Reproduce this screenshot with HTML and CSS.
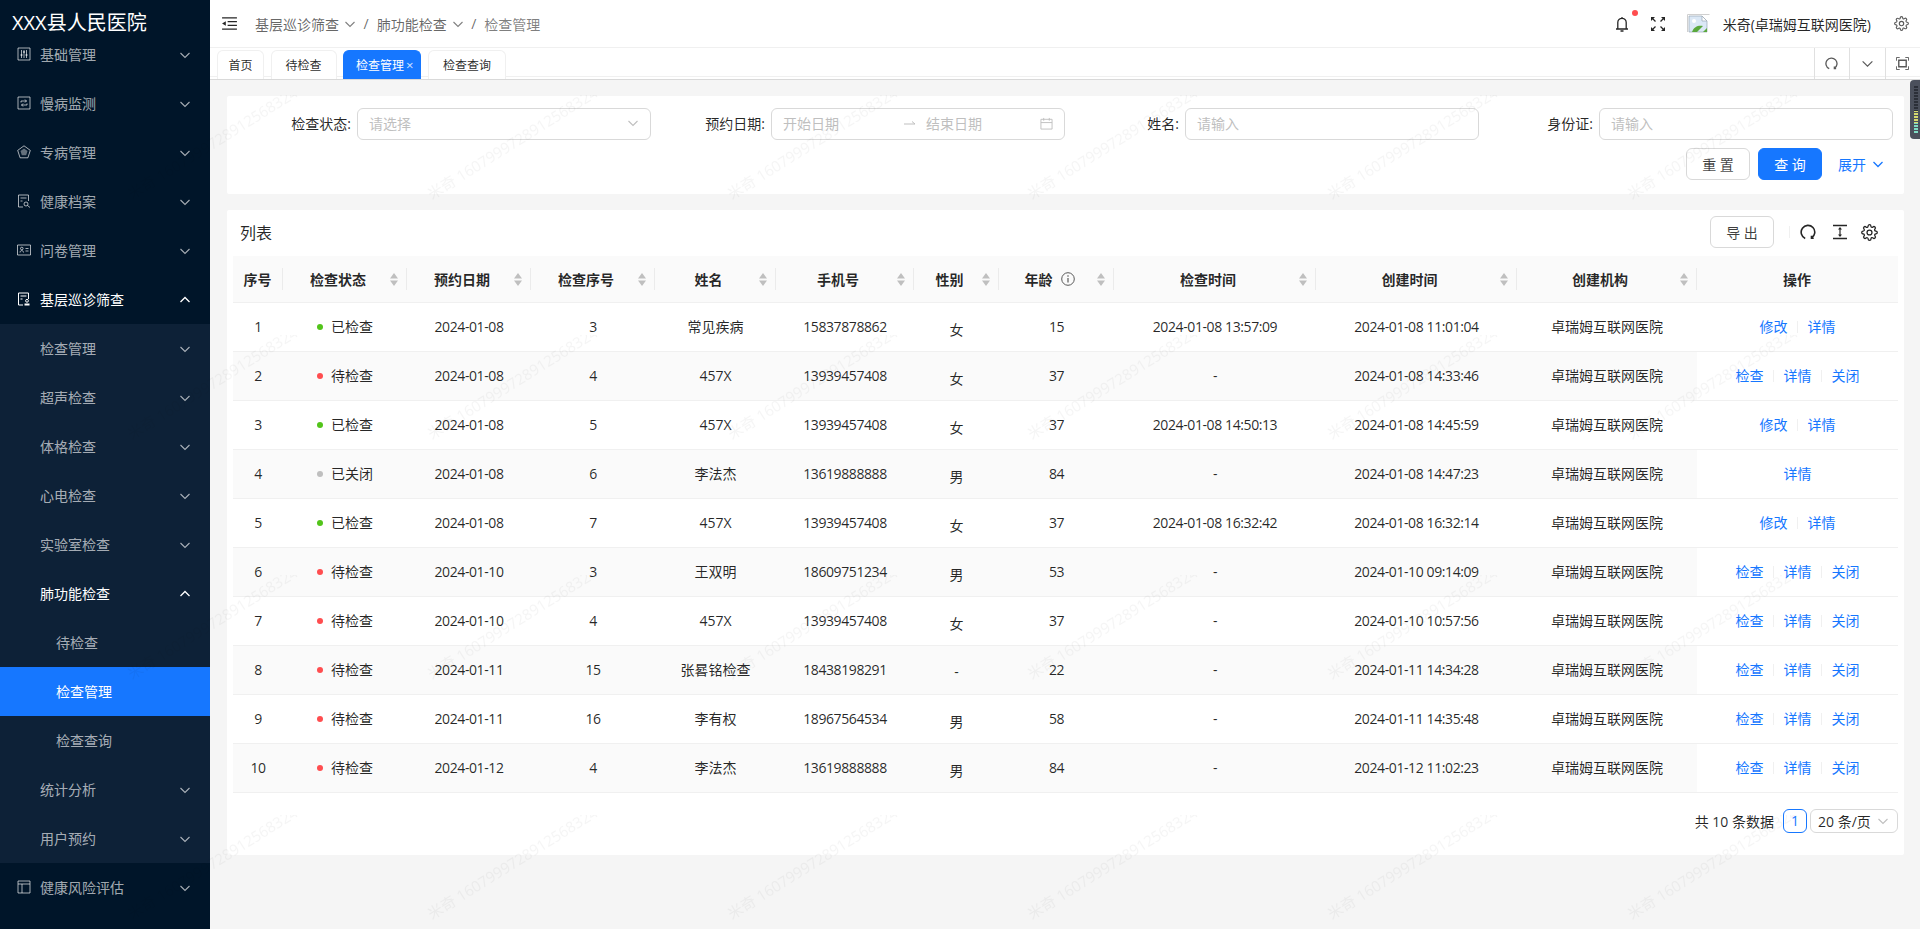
FILE: index.html
```html
<!DOCTYPE html>
<html>
<head>
    <meta charset="utf-8">
    <title>检查管理</title>
    <link rel="stylesheet" href="styles.css">
</head>
<body>

    <svg class="defs" width="0" height="0">
        <symbol id="chev" viewBox="0 0 12 12"><path d="M1.5 4l4.5 4.5L10.5 4" fill="none" stroke="currentColor" stroke-width="1.1"/></symbol>
        <symbol id="chevUp" viewBox="0 0 12 12"><path d="M1.5 8L6 3.5 10.5 8" fill="none" stroke="currentColor" stroke-width="1.3"/></symbol>
        <symbol id="sort" viewBox="0 0 8 13"><path d="M4 0l4 5.5H0zM4 13L0 7.5h8z" fill="#bfbfbf"/></symbol>
        <symbol id="gear" viewBox="0 0 24 24"><g fill="none" stroke="currentColor" stroke-width="1.8"><circle cx="12" cy="12" r="3.5"/><path d="M19.4 15a1.65 1.65 0 0 0 .33 1.82l.06.06a2 2 0 0 1-2.83 2.83l-.06-.06a1.65 1.65 0 0 0-1.82-.33 1.65 1.65 0 0 0-1 1.51V21a2 2 0 0 1-4 0v-.09A1.65 1.65 0 0 0 9 19.4a1.65 1.65 0 0 0-1.82.33l-.06.06a2 2 0 0 1-2.83-2.83l.06-.06a1.65 1.65 0 0 0 .33-1.82 1.65 1.65 0 0 0-1.51-1H3a2 2 0 0 1 0-4h.09A1.65 1.65 0 0 0 4.6 9a1.65 1.65 0 0 0-.33-1.82l-.06-.06a2 2 0 0 1 2.83-2.83l.06.06a1.65 1.65 0 0 0 1.82.33H9a1.65 1.65 0 0 0 1-1.51V3a2 2 0 0 1 4 0v.09a1.65 1.65 0 0 0 1 1.51 1.65 1.65 0 0 0 1.82-.33l.06-.06a2 2 0 0 1 2.83 2.83l-.06.06a1.65 1.65 0 0 0-.33 1.82V9a1.65 1.65 0 0 0 1.51 1H21a2 2 0 0 1 0 4h-.09a1.65 1.65 0 0 0-1.51 1z"/></g></symbol>
        <symbol id="reload" viewBox="0 0 16 16"><path d="M5.2 14.4A6.8 6.8 0 1 1 11.5 14M11.5 11.7v2.6h2.2" fill="none" stroke="currentColor" stroke-width="1.6"/></symbol>
    </svg>

    <aside class="sidebar">
        <div class="logo">XXX县人民医院</div>
        <div class="menuItem">
            <svg class="menuIcon" viewBox="0 0 14 14"><path d="M1 1h12v12H1zM4.5 3v8M7 3v8M9.5 3v8" fill="none" stroke="currentColor"/><path d="M3.5 8h2M6 5h2M8.5 8h2" stroke="currentColor" stroke-width="1.5"/></svg>
            <span>基础管理</span><svg class="chev"><use href="#chev"/></svg>
        </div>
        <div class="menuItem">
            <svg class="menuIcon" viewBox="0 0 14 14"><path d="M1 1h12v12H1zM4 6.5V5h5.5M8 3.5L9.5 5 8 6.5M10 7.5V9H4.5M6 10.5L4.5 9 6 7.5" fill="none" stroke="currentColor"/></svg>
            <span>慢病监测</span><svg class="chev"><use href="#chev"/></svg>
        </div>
        <div class="menuItem">
            <svg class="menuIcon" viewBox="0 0 14 14"><path d="M7 .8l6.3 4.6-2.4 7.4H3.1L.7 5.4z" fill="none" stroke="currentColor"/><path d="M7 3.5l3.5 2.5-1.3 4.2H4.8L3.5 6z" fill="currentColor" opacity=".6"/></svg>
            <span>专病管理</span><svg class="chev"><use href="#chev"/></svg>
        </div>
        <div class="menuItem">
            <svg class="menuIcon" viewBox="0 0 14 14"><path d="M6 13H1.5V1h10v6M3.5 4h6M3.5 7h2" fill="none" stroke="currentColor"/><circle cx="9" cy="10" r="2" fill="none" stroke="currentColor"/><path d="M10.5 11.5L13 13.5" stroke="currentColor"/></svg>
            <span>健康档案</span><svg class="chev"><use href="#chev"/></svg>
        </div>
        <div class="menuItem">
            <svg class="menuIcon" viewBox="0 0 14 14"><path d="M.5 2h13v10H.5zM8.5 5.5h3M8.5 8h3M3 9.5c0-2.5 3.5-2.5 3.5 0" fill="none" stroke="currentColor"/><circle cx="4.8" cy="5.5" r="1.3" fill="none" stroke="currentColor"/></svg>
            <span>问卷管理</span><svg class="chev"><use href="#chev"/></svg>
        </div>
        <div class="menuItem open">
            <svg class="menuIcon" viewBox="0 0 14 14"><path d="M6 13H1.5V1h10v6M3.5 4h6M3.5 7h2" fill="none" stroke="currentColor"/><circle cx="10" cy="8.8" r="1.4" fill="none" stroke="currentColor"/><path d="M7.5 13.5v-2h5v2z" fill="currentColor"/></svg>
            <span>基层巡诊筛查</span><svg class="chev"><use href="#chevUp"/></svg>
        </div>
        <div class="subMenu">
            <div class="menuItem"><span>检查管理</span><svg class="chev"><use href="#chev"/></svg></div>
            <div class="menuItem"><span>超声检查</span><svg class="chev"><use href="#chev"/></svg></div>
            <div class="menuItem"><span>体格检查</span><svg class="chev"><use href="#chev"/></svg></div>
            <div class="menuItem"><span>心电检查</span><svg class="chev"><use href="#chev"/></svg></div>
            <div class="menuItem"><span>实验室检查</span><svg class="chev"><use href="#chev"/></svg></div>
            <div class="menuItem open"><span>肺功能检查</span><svg class="chev"><use href="#chevUp"/></svg></div>
            <div class="menuItem leaf"><span>待检查</span></div>
            <div class="menuItem leaf active"><span>检查管理</span></div>
            <div class="menuItem leaf"><span>检查查询</span></div>
            <div class="menuItem"><span>统计分析</span><svg class="chev"><use href="#chev"/></svg></div>
            <div class="menuItem"><span>用户预约</span><svg class="chev"><use href="#chev"/></svg></div>
        </div>
        <div class="menuItem">
            <svg class="menuIcon" viewBox="0 0 14 14"><path d="M1 1h12v12H1zM1 4h12M5 4v9" fill="none" stroke="currentColor"/></svg>
            <span>健康风险评估</span><svg class="chev"><use href="#chev"/></svg>
        </div>
    </aside>

    <div class="main">
        <header class="topbar">
            <svg class="toggle" viewBox="0 0 16 14"><path d="M0 1h16M6 5h10M6 9h10M0 13h16" stroke="#262626" stroke-width="1.4"/><path d="M4 4.5v5L0 7z" fill="#262626"/></svg>
            <div class="crumbs">
                <span>基层巡诊筛查</span><svg class="crumbChev"><use href="#chev"/></svg>
                <span class="slash">/</span>
                <span>肺功能检查</span><svg class="crumbChev"><use href="#chev"/></svg>
                <span class="slash">/</span>
                <span class="crumbLast">检查管理</span>
            </div>
            <div class="topRight">
                <div class="bell">
                    <svg viewBox="0 0 14 16" width="14" height="16"><path d="M1 13h12M2.8 13V6.5a4.2 4.2 0 0 1 8.4 0V13M5.5 15h3M7 1v1" fill="none" stroke="#262626" stroke-width="1.3"/></svg>
                    <i class="redDot"></i>
                </div>
                <svg class="expand" viewBox="0 0 14 14"><path d="M1 1l3.5 3.5M13 1L9.5 4.5M1 13l3.5-3.5M13 13L9.5 9.500" stroke="#262626" stroke-width="1.3"/><path d="M0 0h4L0 4zM14 0v4L10 0zM0 14v-4l4 4zM14 14h-4l4-4z" fill="#262626"/></svg>
                <svg class="avatar" viewBox="0 0 23 19"><path d="M.5 18V.5h22" fill="none" stroke="#d0d0d0"/><path d="M2 2h13l5 5v11H2z" fill="#dbe8f6" stroke="#9aa7b5" stroke-width=".7"/><path d="M15 2v5h5z" fill="#fff" stroke="#9aa7b5" stroke-width=".7"/><path d="M5 18c2-6 7-7 11-6l-6 6z" fill="#5aa83c"/><path d="M16 18l4-4v4z" fill="#5aa83c"/><circle cx="7" cy="7" r="2" fill="#fff"/></svg>
                <span class="userName">米奇(卓瑞姆互联网医院)</span>
                <svg class="topGear"><use href="#gear"/></svg>
            </div>
        </header>

        <nav class="tabbar">
            <div class="tab first">首页</div>
            <div class="tab">待检查</div>
            <div class="tab current">检查管理<span class="tabClose">×</span></div>
            <div class="tab">检查查询</div>
            <div class="tabTools">
                <div class="tabTool"><svg><use href="#reload"/></svg></div>
                <div class="tabTool"><svg><use href="#chev"/></svg></div>
                <div class="tabTool"><svg viewBox="0 0 14 14"><path d="M.5 4V.5H4M10 .5h3.5V4M13.5 10v3.5H10M4 13.5H.5V10" fill="none" stroke="#595959"/><path d="M3 3.5h8v7H3z" fill="none" stroke="#595959" stroke-width="1.5"/></svg></div>
            </div>
        </nav>

        <div class="content">
            <section class="card searchCard">
                <div class="formRow">
                    <div class="field">
                        <label>检查状态:</label>
                        <div class="input"><span class="hint">请选择</span><svg class="inputChev"><use href="#chev"/></svg></div>
                    </div>
                    <div class="field">
                        <label>预约日期:</label>
                        <div class="input dateInput">
                            <span class="hint">开始日期</span>
                            <svg class="dateArrow" viewBox="0 0 12 6"><path d="M0 4h11L8 1.5" fill="none" stroke="#bfbfbf"/></svg>
                            <span class="hint">结束日期</span>
                            <svg class="dateIcon" viewBox="0 0 14 14"><path d="M1 2.5h12V13H1zM1 6h12M4 1v3M10 1v3" fill="none" stroke="#bfbfbf"/></svg>
                        </div>
                    </div>
                    <div class="field">
                        <label>姓名:</label>
                        <div class="input"><span class="hint">请输入</span></div>
                    </div>
                    <div class="field">
                        <label>身份证:</label>
                        <div class="input"><span class="hint">请输入</span></div>
                    </div>
                </div>
                <div class="formActions">
                    <button class="btn">重 置</button>
                    <button class="btn primary">查 询</button>
                    <a class="more">展开<svg><use href="#chevUp"/></svg></a>
                </div>
            </section>

            <section class="card listCard">
                <div class="listHead">
                    <h2>列表</h2>
                    <button class="btn">导 出</button>
                    <i class="toolSep"></i>
                    <svg class="listTool"><use href="#reload"/></svg>
                    <svg class="listTool" viewBox="0 0 16 16"><path d="M1 1.5h14M1 14.5h14" stroke="#262626" stroke-width="1.4"/><path d="M8 4v8" stroke="#262626" stroke-width="1.2"/><path d="M8 3l2 2.5H6zM8 13l-2-2.5h4z" fill="#262626"/></svg>
                    <svg class="listTool"><use href="#gear"/></svg>
                </div>

                <table class="grid">
                    <colgroup>
                        <col class="c50"><col class="c124"><col class="c124"><col class="c124"><col class="c121"><col class="c138"><col class="c85"><col class="c115"><col class="c202"><col class="c201"><col class="c180"><col class="c201">
                    </colgroup>
                    <thead>
                        <tr>
                            <th><div class="th">序号</div></th>
                            <th><div class="th"><span>检查状态</span><svg class="sort"><use href="#sort"/></svg></div></th>
                            <th><div class="th"><span>预约日期</span><svg class="sort"><use href="#sort"/></svg></div></th>
                            <th><div class="th"><span>检查序号</span><svg class="sort"><use href="#sort"/></svg></div></th>
                            <th><div class="th"><span>姓名</span><svg class="sort"><use href="#sort"/></svg></div></th>
                            <th><div class="th"><span>手机号</span><svg class="sort"><use href="#sort"/></svg></div></th>
                            <th><div class="th"><span>性别</span><svg class="sort"><use href="#sort"/></svg></div></th>
                            <th><div class="th"><span>年龄<svg class="info" viewBox="0 0 14 14"><circle cx="7" cy="7" r="6.3" fill="none" stroke="#595959"/><path d="M7 6v4.5" stroke="#595959" stroke-width="1.2"/><circle cx="7" cy="4" r=".8" fill="#595959"/></svg></span><svg class="sort"><use href="#sort"/></svg></div></th>
                            <th><div class="th"><span>检查时间</span><svg class="sort"><use href="#sort"/></svg></div></th>
                            <th><div class="th"><span>创建时间</span><svg class="sort"><use href="#sort"/></svg></div></th>
                            <th><div class="th"><span>创建机构</span><svg class="sort"><use href="#sort"/></svg></div></th>
                            <th><div class="th">操作</div></th>
                        </tr>
                    </thead>
                    <tbody>
                        <tr>
                            <td>1</td><td><i class="dot green"></i>已检查</td><td>2024-01-08</td><td>3</td><td>常见疾病</td><td>15837878862</td><td class="sex">女</td><td>15</td><td>2024-01-08 13:57:09</td><td>2024-01-08 11:01:04</td><td>卓瑞姆互联网医院</td>
                            <td class="ops"><a>修改</a><i></i><a>详情</a></td>
                        </tr>
                        <tr>
                            <td>2</td><td><i class="dot red"></i>待检查</td><td>2024-01-08</td><td>4</td><td>457X</td><td>13939457408</td><td class="sex">女</td><td>37</td><td>-</td><td>2024-01-08 14:33:46</td><td>卓瑞姆互联网医院</td>
                            <td class="ops"><a>检查</a><i></i><a>详情</a><i></i><a>关闭</a></td>
                        </tr>
                        <tr>
                            <td>3</td><td><i class="dot green"></i>已检查</td><td>2024-01-08</td><td>5</td><td>457X</td><td>13939457408</td><td class="sex">女</td><td>37</td><td>2024-01-08 14:50:13</td><td>2024-01-08 14:45:59</td><td>卓瑞姆互联网医院</td>
                            <td class="ops"><a>修改</a><i></i><a>详情</a></td>
                        </tr>
                        <tr>
                            <td>4</td><td><i class="dot grey"></i>已关闭</td><td>2024-01-08</td><td>6</td><td>李法杰</td><td>13619888888</td><td class="sex">男</td><td>84</td><td>-</td><td>2024-01-08 14:47:23</td><td>卓瑞姆互联网医院</td>
                            <td class="ops"><a>详情</a></td>
                        </tr>
                        <tr>
                            <td>5</td><td><i class="dot green"></i>已检查</td><td>2024-01-08</td><td>7</td><td>457X</td><td>13939457408</td><td class="sex">女</td><td>37</td><td>2024-01-08 16:32:42</td><td>2024-01-08 16:32:14</td><td>卓瑞姆互联网医院</td>
                            <td class="ops"><a>修改</a><i></i><a>详情</a></td>
                        </tr>
                        <tr>
                            <td>6</td><td><i class="dot red"></i>待检查</td><td>2024-01-10</td><td>3</td><td>王双明</td><td>18609751234</td><td class="sex">男</td><td>53</td><td>-</td><td>2024-01-10 09:14:09</td><td>卓瑞姆互联网医院</td>
                            <td class="ops"><a>检查</a><i></i><a>详情</a><i></i><a>关闭</a></td>
                        </tr>
                        <tr>
                            <td>7</td><td><i class="dot red"></i>待检查</td><td>2024-01-10</td><td>4</td><td>457X</td><td>13939457408</td><td class="sex">女</td><td>37</td><td>-</td><td>2024-01-10 10:57:56</td><td>卓瑞姆互联网医院</td>
                            <td class="ops"><a>检查</a><i></i><a>详情</a><i></i><a>关闭</a></td>
                        </tr>
                        <tr>
                            <td>8</td><td><i class="dot red"></i>待检查</td><td>2024-01-11</td><td>15</td><td>张晷铭检查</td><td>18438198291</td><td class="sex">-</td><td>22</td><td>-</td><td>2024-01-11 14:34:28</td><td>卓瑞姆互联网医院</td>
                            <td class="ops"><a>检查</a><i></i><a>详情</a><i></i><a>关闭</a></td>
                        </tr>
                        <tr>
                            <td>9</td><td><i class="dot red"></i>待检查</td><td>2024-01-11</td><td>16</td><td>李有权</td><td>18967564534</td><td class="sex">男</td><td>58</td><td>-</td><td>2024-01-11 14:35:48</td><td>卓瑞姆互联网医院</td>
                            <td class="ops"><a>检查</a><i></i><a>详情</a><i></i><a>关闭</a></td>
                        </tr>
                        <tr>
                            <td>10</td><td><i class="dot red"></i>待检查</td><td>2024-01-12</td><td>4</td><td>李法杰</td><td>13619888888</td><td class="sex">男</td><td>84</td><td>-</td><td>2024-01-12 11:02:23</td><td>卓瑞姆互联网医院</td>
                            <td class="ops"><a>检查</a><i></i><a>详情</a><i></i><a>关闭</a></td>
                        </tr>
                    </tbody>
                </table>

                <div class="pager">
                    <span>共 10 条数据</span>
                    <span class="pageNum">1</span>
                    <span class="pageSize">20 条/页<svg><use href="#chev"/></svg></span>
                </div>
            </section>
        </div>
    </div>

    <div class="sideWidget"><i></i></div>

    <svg class="watermark" width="100%" height="100%">
        <defs>
            <pattern id="wm" width="300" height="240" patternUnits="userSpaceOnUse" patternTransform="translate(0 95)">
                <text x="132" y="105" transform="rotate(-32 132 105)">米奇 16079997289125683244</text>
            </pattern>
        </defs>
        <rect width="100%" height="100%" fill="url(#wm)"/>
    </svg>

</body>
</html>
```

FILE: styles.css
```css
* {
    box-sizing: border-box;
}

html, body {
    height: 100%;
}

body {
    margin: 0;
    display: flex;
    overflow: hidden;
    font-family: "Open Sans", "Noto Sans CJK SC", sans-serif;
    font-size: 14px;
    color: rgba(0, 0, 0, 0.85);
    background-color: #f5f5f5;
}

.defs {
    position: absolute;
}

/* sidebar */
.sidebar {
    width: 210px;
    flex-shrink: 0;
    height: 100%;
    overflow: hidden;
    background-color: #001529;
    color: rgba(255, 255, 255, 0.65);
}

.logo {
    height: 30px;
    padding-left: 12px;
    font-size: 20px;
    line-height: 46px;
    white-space: nowrap;
    color: #fff;
}

.menuItem {
    position: relative;
    display: flex;
    align-items: center;
    height: 49px;
    padding: 0 0 2px 40px;
    white-space: nowrap;
}

.menuIcon {
    position: absolute;
    left: 17px;
    top: 17px;
    width: 14px;
    height: 14px;
}

.chev {
    position: absolute;
    right: 19px;
    top: 19px;
    width: 12px;
    height: 12px;
}

.menuItem.open {
    color: #fff;
}

.subMenu {
    background-color: #0d2137;
}

.menuItem.leaf {
    padding-left: 56px;
}

.menuItem.active {
    background-color: #1677ff;
    color: #fff;
}

/* header */
.main {
    flex: 1;
    min-width: 0;
    display: flex;
    flex-direction: column;
}

.topbar {
    height: 48px;
    flex-shrink: 0;
    display: flex;
    align-items: center;
    padding: 0 11px 0 12px;
    background-color: #fff;
    border-bottom: 1px solid #f0f0f0;
}

.toggle {
    width: 15px;
    height: 13px;
    margin-right: 18px;
}

.crumbs {
    display: flex;
    align-items: center;
    color: rgba(0, 0, 0, 0.6);
}

.crumbChev {
    width: 12px;
    height: 12px;
    margin-left: 5px;
    color: rgba(0, 0, 0, 0.5);
}

.slash {
    margin: 0 8px 0 7.5px;
}

.crumbLast {
    color: rgba(0, 0, 0, 0.5);
}

.topRight {
    margin-left: auto;
    display: flex;
    align-items: center;
}

.bell {
    position: relative;
    display: flex;
    margin-right: 22px;
}

.redDot {
    position: absolute;
    top: -6px;
    right: -9px;
    width: 6px;
    height: 6px;
    border-radius: 50%;
    background-color: #ff4d4f;
}

.expand {
    width: 14px;
    height: 14px;
    margin-right: 22px;
}

.avatar {
    width: 23px;
    height: 19px;
    margin-right: 13px;
}

.userName {
    margin-right: 23px;
    white-space: nowrap;
}

.topGear {
    width: 15px;
    height: 15px;
    color: #595959;
}

/* tabs */
.tabbar {
    height: 32px;
    flex-shrink: 0;
    display: flex;
    align-items: flex-end;
    gap: 6.5px;
    padding-left: 7px;
    background-color: #fff;
    border-bottom: 1px solid #d9d9d9;
    box-shadow: inset 0 -2px 0 #fff, inset 0 -3px 0 #f0f0f0;
}

.tab {
    height: 29px;
    padding: 0 14px 1px;
    display: flex;
    align-items: center;
    font-size: 12px;
    border: 1px solid #f0f0f0;
    border-bottom: 0;
    border-radius: 6px 6px 0 0;
    background-color: #fff;
    white-space: nowrap;
}

.tab.first {
    padding: 0 10.5px 1px;
}

.tab.current {
    padding: 0 7px 1px 12px;
    border-color: #1677ff;
    background-color: #1677ff;
    color: #fff;
}

.tabClose {
    margin-left: 2px;
    font-size: 13px;
    opacity: 0.8;
}

.tabTools {
    margin-left: auto;
    display: flex;
    align-self: stretch;
}

.tabTool {
    width: 35.5px;
    display: flex;
    align-items: center;
    justify-content: center;
    border-left: 1px solid #e0e0e0;
    color: #595959;
}

.tabTool svg {
    width: 13px;
    height: 13px;
}

/* content */
.content {
    flex: 1;
    padding: 16px 16px 0 17px;
}

.card {
    background-color: #fff;
    border-radius: 2px;
}

.searchCard {
    height: 98px;
    padding: 12px 11px 0 10px;
}

.formRow {
    display: grid;
    grid-template-columns: repeat(4, 1fr);
}

.field {
    display: flex;
    align-items: center;
}

.field label {
    width: 120px;
    flex-shrink: 0;
    padding: 0 6px 2px 0;
    text-align: right;
}

.input {
    flex: 1;
    height: 32px;
    display: flex;
    align-items: center;
    padding: 0 11px 2px;
    border: 1px solid #d9d9d9;
    border-radius: 6px;
    background-color: #fff;
}

.hint {
    color: #bfbfbf;
}

.inputChev {
    margin-left: auto;
    width: 12px;
    height: 12px;
    color: #bfbfbf;
}

.dateArrow {
    width: 12px;
    height: 6px;
    margin: 0 10px 0 65px;
}

.dateIcon {
    margin-left: auto;
    width: 13px;
    height: 13px;
}

.formActions {
    display: flex;
    align-items: center;
    justify-content: flex-end;
    gap: 8px;
    margin-top: 8px;
    padding-right: 9px;
}

.btn {
    width: 64px;
    height: 32px;
    padding: 0;
    font: inherit;
    color: rgba(0, 0, 0, 0.75);
    background-color: #fff;
    border: 1px solid #d9d9d9;
    border-radius: 6px;
}

.btn.primary {
    color: #fff;
    border-color: #1677ff;
    background-color: #1677ff;
}

.more {
    display: flex;
    align-items: center;
    margin-left: 8px;
    color: #1677ff;
}

.more svg {
    width: 12px;
    height: 12px;
    margin-left: 6px;
    transform: scaleY(-1);
}

.listCard {
    margin-top: 16px;
    height: 645px;
    padding: 0 6px;
}

.listHead {
    height: 46px;
    display: flex;
    align-items: center;
    padding: 0 20px 2px 7px;
}

.listHead h2 {
    margin: 0 auto 0 0;
    font-size: 16px;
    font-weight: 400;
}

.toolSep {
    width: 1px;
    height: 12px;
    margin: 0 10px 0 15px;
    background-color: #f0f0f0;
}

.listTool {
    width: 16px;
    height: 16px;
    margin-right: 16px;
    color: #262626;
}

.listTool:nth-last-child(2) {
    margin-right: 13px;
}

.listTool:last-child {
    width: 17px;
    height: 17px;
    margin-right: 0;
}

/* table */
.grid {
    width: 100%;
    table-layout: fixed;
    border-collapse: separate;
    border-spacing: 0;
}

.c50 { width: 50px; }
.c85 { width: 85px; }
.c115 { width: 115px; }
.c121 { width: 121px; }
.c124 { width: 124px; }
.c138 { width: 138px; }
.c180 { width: 180px; }
.c201 { width: 201px; }
.c202 { width: 202px; }

.grid th {
    position: relative;
    height: 47px;
    padding: 0;
    font-weight: 600;
    background-color: #fafafa;
    border-bottom: 1px solid #f0f0f0;
}

.grid th:not(:last-child)::after {
    content: "";
    position: absolute;
    right: 0;
    top: 12px;
    height: 22px;
    width: 1px;
    background-color: rgba(0, 0, 0, 0.06);
}

.th {
    display: flex;
    align-items: center;
    justify-content: center;
    padding: 0 9px 0 8px;
}

.th span {
    flex: 1;
    display: flex;
    align-items: center;
    justify-content: center;
}

.sort {
    width: 8px;
    height: 13px;
    margin-left: 5px;
    flex-shrink: 0;
}

.info {
    width: 14px;
    height: 14px;
    margin-left: 8px;
}

.grid td {
    height: 49px;
    padding: 0 0 2px;
    text-align: center;
    border-bottom: 1px solid #f0f0f0;
    white-space: nowrap;
}

/* the reference's digits are narrower than Open Sans */
.grid td:nth-child(1), .grid td:nth-child(3), .grid td:nth-child(4),
.grid td:nth-child(6), .grid td:nth-child(8), .grid td:nth-child(9),
.grid td:nth-child(10) {
    letter-spacing: -0.4px;
}

.grid tbody tr:nth-child(even) td {
    background-color: #fafafa;
}

.grid tbody tr td.ops {
    background-color: #fff;
    color: #1677ff;
}

.grid td.sex {
    padding: 3px 0 0;
}

.ops i {
    display: inline-block;
    width: 1px;
    height: 12px;
    margin: 0 9.5px;
    vertical-align: -1px;
    background-color: #f0f0f0;
}

.dot {
    display: inline-block;
    width: 6px;
    height: 6px;
    margin-right: 8px;
    border-radius: 50%;
    vertical-align: 2px;
}

.dot.green { background-color: #52c41a; }
.dot.red { background-color: #ff4d4f; }
.dot.grey { background-color: #bfbfbf; }

.pager {
    display: flex;
    justify-content: flex-end;
    align-items: center;
    margin-top: 16px;
    height: 24px;
}

.pageNum {
    width: 24px;
    height: 24px;
    margin: 0 3px 0 9px;
    text-align: center;
    line-height: 22px;
    color: #1677ff;
    border: 1px solid #1677ff;
    border-radius: 6px;
}

.pageSize {
    width: 88px;
    height: 24px;
    display: flex;
    align-items: center;
    padding-left: 7px;
    border: 1px solid #d9d9d9;
    border-radius: 6px;
}

.pageSize svg {
    width: 12px;
    height: 12px;
    margin-left: 6px;
    color: #bfbfbf;
}

/* things lying over the page */
.sideWidget {
    position: absolute;
    right: 0;
    top: 80px;
    width: 10px;
    height: 59px;
    padding: 6px 2px 5px 4px;
    background-color: #4b505c;
    border-radius: 4px 0 0 4px;
}

.sideWidget i {
    display: block;
    height: 100%;
    background: repeating-linear-gradient(transparent 0 2px, #4b505c 2px 3px), linear-gradient(#2b2f38 0 52%, #d5d86e 52% 78%, #7fdcc4 78%);
}

.watermark {
    position: absolute;
    left: 0;
    top: 0;
    z-index: 10;
    pointer-events: none;
}

.watermark text {
    font-size: 15px;
    fill: rgba(0, 0, 0, 0.04);
}
```
